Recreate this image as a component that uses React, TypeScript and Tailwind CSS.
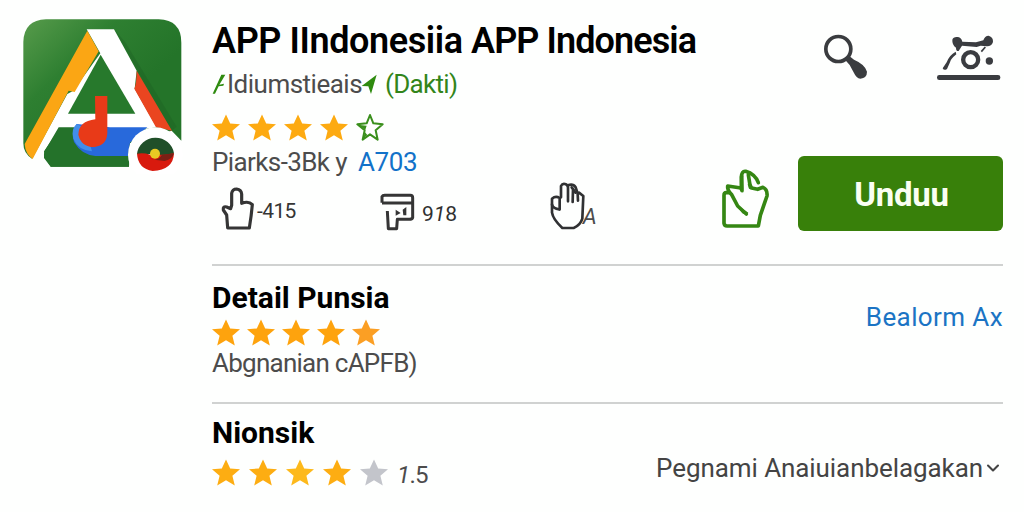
import type { ReactNode } from 'react';
import { ChevronDown } from 'lucide-react';

const STAR_PATH = 'M14 0.5 L18.2 9.6 L28 10.4 L20.4 17 L22.8 27 L14 21.6 L5.2 27 L7.6 17 L0 10.4 L9.8 9.6 Z';

function Star({ fill }: { fill: string }) {
  return (
    <svg viewBox="0 0 28 27.5" className="h-[27px] w-7" preserveAspectRatio="none">
      <path d={STAR_PATH} fill={fill} />
    </svg>
  );
}

function OutlineStar() {
  return (
    <svg viewBox="0 0 84 84" className="h-7 w-7">
      <path
        d="M42 6 L52 31 L80 34 L59 52 L65 80 L42 64 L20 80 L26 52 L4 34 L32 31 Z"
        fill="#fff"
        stroke="#3a8f1c"
        strokeWidth="6"
        strokeLinejoin="round"
      />
      <path d="M5 35 L32 38 L28 50 Z M22 76 L27 58 L34 66 Z" fill="#3a8f1c" />
    </svg>
  );
}

function AppLogo() {
  return (
    <svg viewBox="30 18 494 474" className="h-[158px] w-[164.67px] shrink-0">
      <defs>
        <linearGradient id="leaf" x1="0" y1="0" x2="0.6" y2="0.6">
          <stop offset="0" stopColor="#579b4b" />
          <stop offset="0.5" stopColor="#2e7f31" />
          <stop offset="1" stopColor="#247429" />
        </linearGradient>
      </defs>
      <path
        d="M108 28 H446 Q514 30 514 98 V392 L485 362 L360 400 L357 470 H122 L102 442 V424 L66 446 Q40 430 40 400 V96 Q42 30 108 28 Z"
        fill="url(#leaf)"
      />
      <path d="M312 58 L345 95 L500 350 L485 362 Z" fill="#1b5a20" opacity="0.3" />
      <path d="M230 58 H312 L380 182 L374 236 L440 352 L410 356 L150 354 L102 424 L104 440 L66 447 L172 252 L190 242 L271 130 Z" fill="#fff" />
      <path d="M66 447 L104 442 L122 471 H60 Z" fill="#fefffe" />
      <path d="M272 134 L376 311 H174 Z" fill="#27792c" />
      <path d="M146 352 H200 L240 440 L357 438 V470 H122 L102 444 Q100 432 106 420 Z" fill="#24722a" />
      <path d="M232 62 L266 124 L194 246 L176 242 L68 447 Q46 432 44 402 Z" fill="#fba614" />
      <path d="M380 182 L486 362 L438 352 L373 236 Q380 220 380 182 Z" fill="#ea4520" />
      <path d="M200 342 L300 352 H412 L360 398 L354 438 H256 Q214 434 192 396 Q182 364 200 342 Z" fill="#2869db" />
      <path d="M200 342 Q182 358 190 386 Q204 420 246 424 L226 354 Z" fill="#438eea" />
      <path d="M255 258 H292 V370 Q290 406 254 411 Q214 412 205 374 Q206 334 256 328 Z" fill="#e83a18" />
      <circle cx="436" cy="434" r="82" fill="#fff" />
      <path d="M381 432 A56 55 0 0 1 492 430 L468 448 Q436 426 406 434 Z" fill="#204f29" />
      <path d="M381 431 Q402 428 420 434 H464 L492 430 Q490 480 428 483 Q384 476 381 431 Z" fill="#d81a0e" />
      <path d="M416 444 Q444 456 456 434 L492 430 Q488 448 464 453 Q440 452 416 444 Z" fill="#7b2015" />
      <circle cx="435" cy="431" r="15" fill="#e9c923" />
    </svg>
  );
}

function SearchGlyph() {
  return (
    <svg viewBox="100 42 135 141" className="h-[47px] w-[45px]">
      <circle cx="146" cy="90" r="37.5" fill="none" stroke="#3a3c3f" strokeWidth="11" />
      <path d="M164 120 L178 110 L193 122 Q226 136 232 158 Q232 177 212 179 Q200 178 193 162 L180 138 Z" fill="#3a3c3f" />
    </svg>
  );
}

function MachineGlyph() {
  return (
    <svg viewBox="438 42 195 144" className="h-12 w-[65px]">
      <g fill="#3a3c40">
        <path d="M487 62 Q490 52 504 54 Q514 56 517 68 L558 70 L580 64 Q584 50 596 50 Q610 54 609 69 Q604 83 590 82 L572 80 L560 84 L516 80 L506 96 Q498 98 498 86 Q486 78 487 62 Z" />
        <path d="M497 98 Q478 108 470 130 L458 148 Q462 156 471 150 L480 130 Q482 120 499 106 Z" />
        <circle cx="598" cy="126" r="11" />
        <rect x="441" y="168" width="190" height="15" rx="7" />
      </g>
      <circle cx="542" cy="122" r="22.5" fill="none" stroke="#3a3c40" strokeWidth="13" />
      <path d="M586 84 L574 98" stroke="#3a3c40" strokeWidth="5" />
    </svg>
  );
}

function PointUpGlyph() {
  return (
    <svg viewBox="60 240 105 135" className="mb-0.5 h-[45px] w-[35px]">
      <path
        d="M83 366 L80 327 L70 312 Q68 300 80 303 L92 308 L95 298 V262 Q97 249 110 249 Q124 251 125 264 V292 Q146 284 157 296 Q154 330 148 366 Z"
        fill="none"
        stroke="#353535"
        strokeWidth="9.5"
        strokeLinejoin="round"
      />
    </svg>
  );
}

function PrinterGlyph() {
  return (
    <svg viewBox="540 264 105 114" className="mt-[5px] ml-px h-[38px] w-[35px]">
      <g fill="none" stroke="#353535" strokeWidth="9" strokeLinejoin="round">
        <path d="M546 293 V275 Q548 271 554 271 H631 Q638 271 638 278 V338 Q636 343 628 343 H592 L590 371 H565 L562 318" />
        <path d="M546 294 H637" />
      </g>
      <path d="M587 314 L602 324 L587 332 Z M608 314 L619 306 V331 H610 Z" fill="#353535" />
    </svg>
  );
}

function HandGlyph() {
  return (
    <svg viewBox="58 60 110 150" className="mb-2 ml-0.5 h-[50px] w-[36.67px]">
      <g fill="none" stroke="#303133" strokeWidth="8" strokeLinejoin="round" strokeLinecap="round">
        <path d="M90 148 V114 Q78 106 67 116 V158 Q70 178 98 204 H132 Q152 196 158 176 L161 108 L148 98" />
        <path d="M67 134 Q70 146 89 148" />
        <path d="M94 112 V78 Q98 70 106 72 Q114 74 115 82 V124" />
        <path d="M115 76 Q130 70 138 82 L144 100 L145 122" />
        <path d="M130 88 L129 126 M126 82 L138 98" />
      </g>
    </svg>
  );
}

function WaveGlyph() {
  return (
    <svg viewBox="574 24 148 183" className="mt-[9px] h-[61px] w-[49.33px]">
      <g fill="none" stroke="#358713" strokeWidth="11" strokeLinejoin="round" strokeLinecap="round">
        <path d="M600 98 H590 Q583 98 583 106 V190 Q584 198 592 198 H686 L692 166 L712 108 Q714 88 700 82 L684 88 L666 84 L660 74" />
        <path d="M635 88 V52 Q636 32 648 34 Q676 42 686 68" />
        <path d="M634 84 L594 78 Q592 90 606 104 L624 138 L650 162" />
        <path d="M636 48 L637 92" />
        <path d="M656 44 L662 82" />
      </g>
      <path d="M620 136 L632 142 L656 158 Q650 166 638 160 Z" fill="#358713" />
    </svg>
  );
}

function SlashGlyph() {
  return (
    <svg viewBox="36 176 45 62" className="h-[20.67px] w-[15px]">
      <path d="M38 235 L64 178 L76 178 L58 208 L72 205 L70 211 L56 213 L45 235 Z" fill="#2e8b0f" />
    </svg>
  );
}

function ArrowGlyph() {
  return (
    <svg viewBox="484 176 48 62" className="h-[20.67px] w-4">
      <path d="M531 178 L514 236 L506 213 L486 212 Z" fill="#2e8b0f" />
    </svg>
  );
}

function Heading({ children }: { children: ReactNode }) {
  return <h2 className="text-[30px] leading-[30px] font-bold text-black">{children}</h2>;
}

export default function App() {
  return (
    <div className="flex h-[512px] w-[1024px] overflow-hidden bg-[#fefffe] font-[Roboto,sans-serif] whitespace-nowrap text-[#4c4c4c]">
      <aside className="w-[212px] shrink-0 pt-4 pl-5">
        <AppLogo />
      </aside>

      <main className="w-[791px] shrink-0">
        {/* App header */}
        <section className="flex h-[266px] border-b-2 border-[#d0d2d1]">
          <div className="w-[509px] shrink-0 pt-5">
            <h1 className="flex h-[41px] items-center text-[36px] font-semibold text-black">
              <span className="w-[259px] tracking-[-0.4px]">APP IIndonesiia</span>
              <span className="tracking-[-0.9px]">APP Indonesia</span>
            </h1>
            <div className="flex h-[47px] items-center text-[26px]">
              <SlashGlyph />
              <span className="w-[134px] tracking-[-0.5px]">Idiumstieais</span>
              <ArrowGlyph />
              <span className="ml-2 tracking-[-0.7px] text-[#32851a]">(Dakti)</span>
            </div>
            <div className="flex h-[38px] items-center gap-2">
              <Star fill="#fdaa11" />
              <Star fill="#fdaa11" />
              <Star fill="#fdaa11" />
              <Star fill="#fdaa11" />
              <OutlineStar />
            </div>
            <div className="flex h-8 items-center text-[26px]">
              <span className="w-[146px] tracking-[-0.6px]">Piarks-3Bk y</span>
              <span className="tracking-[-0.4px] text-[#1272c9]">A703</span>
            </div>
            <div className="flex h-[62px] items-center pl-2">
              <PointUpGlyph />
              <span className="w-[124px] pt-1.5 pl-0.5 text-[21px] tracking-[-0.6px] text-[#353535]">-415</span>
              <PrinterGlyph />
              <span className="w-[132px] pt-3 pl-[7px] text-[21px] text-[#303030]">
                9<i>1</i>8
              </span>
              <HandGlyph />
              <i className="-ml-[3px] pt-3.5 text-[22px]">A</i>
            </div>
          </div>

          <div className="grow">
            <div className="flex h-[156px] items-start justify-end gap-[68px] pt-[33px] pr-0.5">
              <SearchGlyph />
              <MachineGlyph />
            </div>
            <div className="flex items-center justify-between">
              <WaveGlyph />
              <button className="h-[75px] w-[205px] rounded-md bg-[#38800a] pt-0.5 pl-0.5 text-[33px] font-bold tracking-[-0.3px] text-[#fbfff3]">
                Unduu
              </button>
            </div>
          </div>
        </section>

        {/* Detail */}
        <section className="flex h-[138px] justify-between border-b-2 border-[#d0d2d1] pt-[17px]">
          <div>
            <Heading>Detail Punsia</Heading>
            <div className="flex h-[39px] items-center gap-[7px]">
              <Star fill="#fea30d" />
              <Star fill="#fea30d" />
              <Star fill="#fea30d" />
              <Star fill="#fea30d" />
              <Star fill="#fb9f24" />
            </div>
            <p className="text-[26px] leading-[22px] tracking-[-0.75px]">Abgnanian cAPFB)</p>
          </div>
          <a className="pt-[19px] text-[26px] leading-[30px] tracking-[0.4px] text-[#1b74c4]">Bealorm Ax</a>
        </section>

        {/* Nionsik */}
        <section className="flex justify-between pt-[14px]">
          <div>
            <Heading>Nionsik</Heading>
            <div className="flex h-12 items-center gap-[9px]">
              <Star fill="#fdad12" />
              <Star fill="#fdad12" />
              <Star fill="#fdb91b" />
              <Star fill="#fdad12" />
              <Star fill="#c3c5cb" />
              <span className="pt-1.5 text-[24px] tracking-[-0.7px]"><i>1</i>.5</span>
            </div>
          </div>
          <div className="mt-[35px] flex h-[30px] items-center text-[26px] tracking-[-0.08px] text-[#444]">
            <span>Pegnami Anaiuianbelagakan</span>
            <ChevronDown className="h-5 w-5" strokeWidth={2.5} />
          </div>
        </section>
      </main>
    </div>
  );
}
